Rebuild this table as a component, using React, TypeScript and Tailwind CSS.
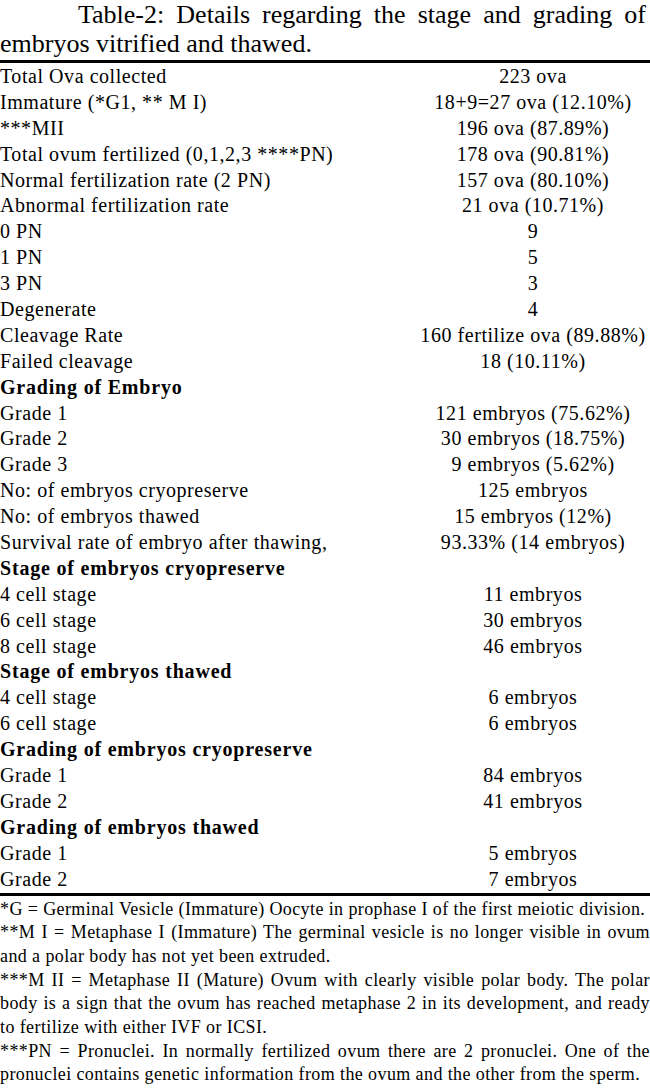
const ROWS: { label: string; value?: string; head?: boolean }[] = [
  { label: "Total Ova collected", value: "223 ova" },
  { label: "Immature (*G1, ** M I)", value: "18+9=27 ova (12.10%)" },
  { label: "***MII", value: "196 ova (87.89%)" },
  { label: "Total ovum fertilized (0,1,2,3 ****PN)", value: "178 ova (90.81%)" },
  { label: "Normal fertilization rate (2 PN)", value: "157 ova (80.10%)" },
  { label: "Abnormal fertilization rate", value: "21 ova (10.71%)" },
  { label: "0 PN", value: "9" },
  { label: "1 PN", value: "5" },
  { label: "3 PN", value: "3" },
  { label: "Degenerate", value: "4" },
  { label: "Cleavage Rate", value: "160 fertilize ova (89.88%)" },
  { label: "Failed cleavage", value: "18 (10.11%)" },
  { label: "Grading of Embryo", head: true },
  { label: "Grade 1", value: "121 embryos (75.62%)" },
  { label: "Grade 2", value: "30 embryos (18.75%)" },
  { label: "Grade 3", value: "9 embryos (5.62%)" },
  { label: "No: of embryos cryopreserve", value: "125 embryos" },
  { label: "No: of embryos thawed", value: "15 embryos (12%)" },
  { label: "Survival rate of embryo after thawing,", value: "93.33% (14 embryos)" },
  { label: "Stage of embryos cryopreserve", head: true },
  { label: "4 cell stage", value: "11 embryos" },
  { label: "6 cell stage", value: "30 embryos" },
  { label: "8 cell stage", value: "46 embryos" },
  { label: "Stage of embryos thawed", head: true },
  { label: "4 cell stage", value: "6 embryos" },
  { label: "6 cell stage", value: "6 embryos" },
  { label: "Grading of embryos cryopreserve", head: true },
  { label: "Grade 1", value: "84 embryos" },
  { label: "Grade 2", value: "41 embryos" },
  { label: "Grading of embryos thawed", head: true },
  { label: "Grade 1", value: "5 embryos" },
  { label: "Grade 2", value: "7 embryos" },
];

const NOTES = [
  "*G = Germinal Vesicle (Immature) Oocyte in prophase I of the first meiotic division.",
  "**M I = Metaphase I (Immature) The germinal vesicle is no longer visible in ovum and a polar body has not yet been extruded.",
  "***M II = Metaphase II (Mature) Ovum with clearly visible polar body. The polar body is a sign that the ovum has reached metaphase 2 in its development, and ready to fertilize with either IVF or ICSI.",
  "***PN = Pronuclei. In normally fertilized ovum there are 2 pronuclei. One of the pronuclei contains genetic information from the ovum and the other from the sperm.",
];

export default function App() {
  return (
    <div className="w-[650px] bg-white text-black font-['Liberation_Serif',serif]">
      <h1 className="indent-[78px] text-[26px] leading-[29px] text-justify pr-1">
        Table-2: Details regarding the stage and grading of embryos vitrified and thawed.
      </h1>
      <div className="mt-[2px] border-y-[3px] border-black pb-[1px]">
        {ROWS.map((r, i) => (
          <div key={i} className="flex h-[25.9px] items-center text-[20px] leading-[22px] tracking-[0.55px]">
            <span className={`w-[416px] shrink-0 ${r.head ? "font-bold tracking-[0.8px]" : ""}`}>{r.label}</span>
            <span className="flex-1 text-center">{r.value}</span>
          </div>
        ))}
      </div>
      <div className="pt-[2px] text-[18px] leading-[23.7px] tracking-[0.4px] text-justify">
        {NOTES.map((n, i) => (
          <p key={i}>{n}</p>
        ))}
      </div>
    </div>
  );
}
